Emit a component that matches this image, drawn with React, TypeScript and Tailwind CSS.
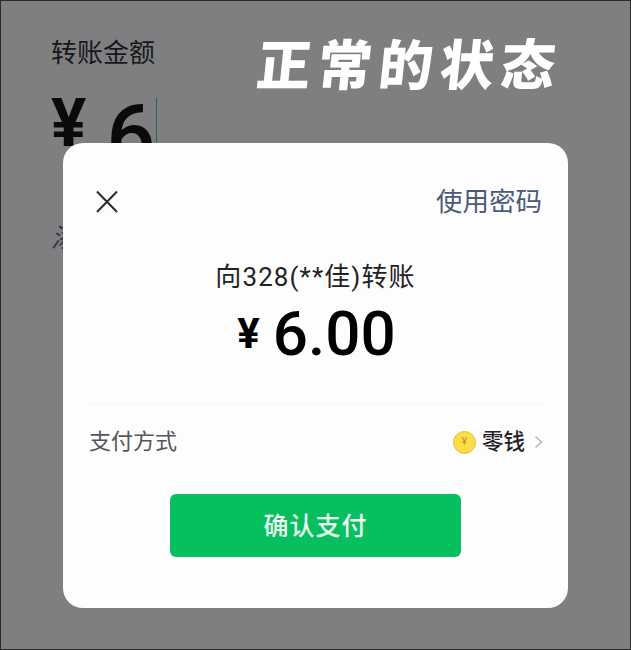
const cjk = "font-['Roboto','Noto_Sans_CJK_SC',sans-serif]";

export default function App() {
  return (
    <div className={`relative h-[650px] w-[631px] overflow-hidden border border-[#2a2a2c] bg-[#7f7f82] ${cjk}`}>
      {/* page behind the dialog */}
      <div className="flex items-start justify-between pl-[50px] pr-[68px] pt-[36px]">
        <div className="flex flex-col">
          <div className="mt-[1px] text-[26px] leading-[30px] text-[#18181a]">转账金额</div>
          <div className="mt-[14px] flex h-[60px] items-start">
            <span className="text-[66px] font-bold leading-[84px] text-[#0a0a0a]">¥</span>
            <span className="ml-[20px] text-[86px] font-medium leading-[108px] text-[#0a0a0a]">6</span>
            <span className="ml-[1px] mt-[16px] h-[44px] w-[1px] bg-[#2f5f58]" />
          </div>
          <div className="mt-[81px] text-[26px] italic leading-[30px] text-[#2f3440]">添</div>
        </div>
        <div className="-skew-x-6 text-[54px] font-black leading-[60px] tracking-[7px] text-white">正常的状态</div>
      </div>

      {/* dialog */}
      <div className="absolute left-[62px] top-[142px] flex h-[465px] w-[505px] flex-col rounded-[20px] bg-[#fdfdfe]">
        <div className="flex items-center justify-between pl-[32px] pr-[26px] pt-[42px]">
          <svg width="24" height="24" viewBox="0 0 24 24" fill="none" stroke="#2b2b2e" strokeWidth="2">
            <path d="M2 1.5 L22 22 M22 1.5 L2 22" />
          </svg>
          <span className="text-[26.5px] leading-[34px] text-[#4b5a78]">使用密码</span>
        </div>
        <div className="mt-[42px] text-center text-[26px] leading-[32px] tracking-[1.1px] text-[#222226]">向328(**佳)转账</div>
        <div className="ml-[2px] mt-[9px] flex items-center justify-center text-black">
          <span className="text-[42px] font-bold leading-[64px]">¥</span>
          <span className="ml-[13px] text-[62px] font-medium leading-[64px]">6.00</span>
        </div>
        <div className="ml-[26px] mr-[25px] mt-[37px] flex items-center justify-between border-t border-[#f6f6f8] pt-[23px]">
          <span className="text-[22px] leading-[30px] text-[#55555a]">支付方式</span>
          <div className="flex items-center">
            <span className="flex h-[23px] w-[23px] items-center justify-center rounded-full border border-[#e8c22e] bg-[#fbdc4a] text-[10px] leading-none text-[#b8901a]">¥</span>
            <span className="ml-[6px] text-[21.5px] font-medium leading-[30px] text-[#222226]">零钱</span>
            <svg className="ml-[9px]" width="9" height="14" viewBox="0 0 9 14" fill="none" stroke="#b4b4b8" strokeWidth="1.5">
              <path d="M1.5 1.5 L7.5 7 L1.5 12.5" />
            </svg>
          </div>
        </div>
        <button className="mx-auto mt-[37px] flex h-[63px] w-[291px] items-center justify-center rounded-[6px] bg-[#07bf5f] pt-[3px] text-[25px] font-medium tracking-[1px] text-[#eafbf2]">
          确认支付
        </button>
      </div>
    </div>
  );
}
